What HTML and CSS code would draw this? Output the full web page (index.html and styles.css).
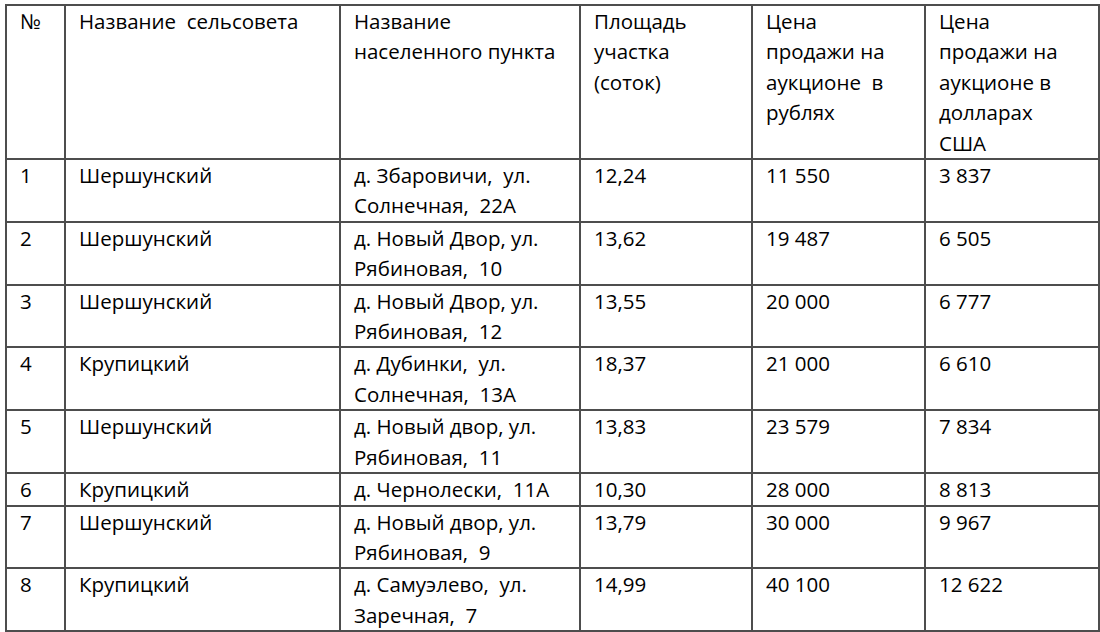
FILE: index.html
```html
<!DOCTYPE html>
<html lang="ru">
<head>
<meta charset="utf-8">
<title>Участки</title>
<link rel="stylesheet" href="styles.css">
</head>
<body>
<table class="grid">
  <colgroup>
    <col class="c-num">
    <col class="c-council">
    <col class="c-place">
    <col class="c-area">
    <col class="c-rub">
    <col class="c-usd">
  </colgroup>
  <thead>
    <tr>
      <th>№</th>
      <th>Название&nbsp; сельсовета</th>
      <th>Название<br>населенного пункта</th>
      <th>Площадь<br>участка<br>(соток)</th>
      <th>Цена<br>продажи на<br>аукционе&nbsp; в<br>рублях</th>
      <th>Цена<br>продажи на<br>аукционе в<br>долларах<br>США</th>
    </tr>
  </thead>
  <tbody>
    <tr><td>1</td><td>Шершунский</td><td>д. Збаровичи,&nbsp; ул.<br>Солнечная,&nbsp; 22А</td><td>12,24</td><td>11 550</td><td>3 837</td></tr>
    <tr><td>2</td><td>Шершунский</td><td>д. Новый Двор, ул.<br>Рябиновая,&nbsp; 10</td><td>13,62</td><td>19 487</td><td>6 505</td></tr>
    <tr><td>3</td><td>Шершунский</td><td>д. Новый Двор, ул.<br>Рябиновая,&nbsp; 12</td><td>13,55</td><td>20 000</td><td>6 777</td></tr>
    <tr><td>4</td><td>Крупицкий</td><td>д. Дубинки,&nbsp; ул.<br>Солнечная,&nbsp; 13А</td><td>18,37</td><td>21 000</td><td>6 610</td></tr>
    <tr><td>5</td><td>Шершунский</td><td>д. Новый двор, ул.<br>Рябиновая,&nbsp; 11</td><td>13,83</td><td>23 579</td><td>7 834</td></tr>
    <tr><td>6</td><td>Крупицкий</td><td>д. Чернолески,&nbsp; 11А</td><td>10,30</td><td>28 000</td><td>8 813</td></tr>
    <tr><td>7</td><td>Шершунский</td><td>д. Новый двор, ул.<br>Рябиновая,&nbsp; 9</td><td>13,79</td><td>30 000</td><td>9 967</td></tr>
    <tr><td>8</td><td>Крупицкий</td><td>д. Самуэлево,&nbsp; ул.<br>Заречная,&nbsp; 7</td><td>14,99</td><td>40 100</td><td>12 622</td></tr>
    <tr class="tail"><td></td><td></td><td></td><td></td><td></td><td></td></tr>
  </tbody>
</table>
</body>
</html>
```

FILE: styles.css
```css
html, body {
  margin: 0;
  padding: 0;
  background: #ffffff;
  overflow: hidden;
}

body {
  font-family: "Open Sans", "Liberation Sans", sans-serif;
  font-size: 20.5px;
  color: #000000;
}

.grid {
  border-collapse: collapse;
  table-layout: fixed;
  width: 1093px;
  margin: 4px 0 0 5px;
}

.c-num { width: 59px; }
.c-council { width: 275px; }
.c-place { width: 240px; }
.c-area { width: 172px; }
.c-rub { width: 173px; }
.c-usd { width: 174px; }

.grid th,
.grid td {
  border: 2px solid #4d4d4d;
  padding: 0 0 0 13px;
  text-align: left;
  vertical-align: top;
  font-weight: normal;
  line-height: 30.4px;
  white-space: nowrap;
  overflow: hidden;
}

.grid .tail td {
  height: 40px;
}
```
